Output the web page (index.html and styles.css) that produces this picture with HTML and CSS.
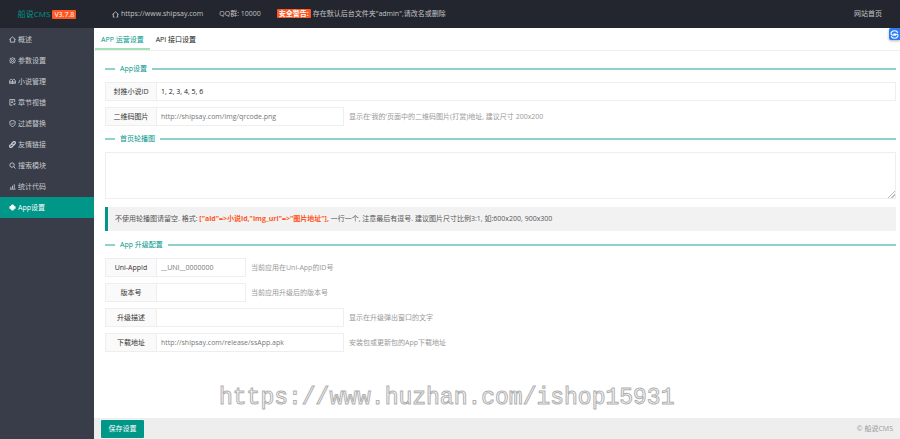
FILE: index.html
```html
<!DOCTYPE html>
<html lang="zh-CN">
<head>
    <meta charset="UTF-8">
    <meta name="viewport" content="width=device-width, initial-scale=1.0">
    <title>船说CMS</title>
    <link rel="stylesheet" href="styles.css">
</head>
<body>
    <header class="header">
        <div class="logo">船说CMS <span class="badge">V3.7.8</span></div>
        <nav class="header-nav">
            <a href="#"><svg class="icon" viewBox="0 0 16 16"><path d="M1 8l7-6 7 6M3 7v7h3M13 7v7h-3"/></svg>https://www.shipsay.com</a>
            <span class="qq">QQ群: 10000</span>
            <span><span class="badge warning">安全警告:</span> 存在默认后台文件夹"admin",请改名或删除</span>
        </nav>
        <a class="home-link" href="#">网站首页</a>
    </header>

    <div class="layout">
        <nav class="side">
            <a href="#"><svg class="icon" viewBox="0 0 16 16"><path d="M1 8l7-6 7 6M3 7v7h10V7"/></svg>概述</a>
            <a href="#"><svg class="icon" viewBox="0 0 16 16"><path d="M8 1l2 2 3 0 0 3 2 2-2 2 0 3-3 0-2 2-2-2-3 0 0-3-2-2 2-2 0-3 3 0z"/><circle cx="8" cy="8" r="2.5"/></svg>参数设置</a>
            <a href="#"><svg class="icon" viewBox="0 0 16 16"><path d="M8 5v8M8 5C6 2 3 3 2 5L1 12h14l-1-7c-1-2-4-3-6 0M2 9h12"/></svg>小说管理</a>
            <a href="#"><svg class="icon" viewBox="0 0 16 16"><path d="M13 7V1H2v13h6M5 5h5M5 8h4M10 14l5-5M11 10l3 4"/></svg>章节视错</a>
            <a href="#"><svg class="icon" viewBox="0 0 16 16"><path d="M8 1l6 2v5c0 4-3 6-6 7-3-1-6-3-6-7V3zM5 8l2 2 4-4"/></svg>过滤替换</a>
            <a href="#"><svg class="icon bold" viewBox="0 0 16 16"><path d="M7 9c-2-2-1-3 0-4l3-3c3-2 6 1 4 4l-3 3M9 7c2 2 1 3 0 4l-3 3c-3 2-6-1-4-4l2-2"/></svg>友情链接</a>
            <a href="#"><svg class="icon" viewBox="0 0 16 16"><circle cx="7" cy="7" r="5"/><path d="M11 11l4 4"/></svg>搜索模块</a>
            <a href="#"><svg class="icon" viewBox="0 0 16 16"><path d="M2 14h13M4 13V9M8 13V6M12 13V3"/></svg>统计代码</a>
            <a href="#" class="active"><svg class="icon solid" viewBox="0 0 16 16"><path d="M4 5c0-5 8-5 8 0h3v6h-3v2h-2v2H6v-2H4v-2H1V5z"/></svg>App设置</a>
        </nav>

        <main class="main">
            <div class="tabs">
                <a href="#" class="active">APP 运营设置</a>
                <a href="#">API 接口设置</a>
            </div>

            <form class="form" id="appForm">
                <fieldset class="title"><legend>App设置</legend></fieldset>
                <div class="row">
                    <label for="pushId">封推小说ID</label>
                    <input class="dark" type="text" id="pushId" value="1, 2, 3, 4, 5, 6">
                </div>
                <div class="row">
                    <label for="qrcode">二维码图片</label>
                    <input class="medium" type="text" id="qrcode" value="http://shipsay.com/img/qrcode.png">
                    <span class="tip">显示在'我的'页面中的二维码图片(打赏)地址, 建议尺寸 200x200</span>
                </div>

                <fieldset class="title"><legend><label for="slides">首页轮播图</label></legend></fieldset>
                <textarea id="slides"></textarea>
                <p class="note">不使用轮播图请留空. 格式: <strong>["aid"=&gt;小说id,"img_url"=&gt;"图片地址"],</strong> 一行一个, 注意最后有逗号. 建议图片尺寸比例3:1, 如:600x200, 900x300</p>

                <fieldset class="title"><legend>App 升级配置</legend></fieldset>
                <div class="row">
                    <label for="uniAppId">Uni-AppId</label>
                    <input class="short" type="text" id="uniAppId" value="__UNI__0000000">
                    <span class="tip">当前应用在Uni-App的ID号</span>
                </div>
                <div class="row">
                    <label for="version">版本号</label>
                    <input class="short" type="text" id="version">
                    <span class="tip">当前应用升级后的版本号</span>
                </div>
                <div class="row">
                    <label for="desc">升级描述</label>
                    <input class="medium" type="text" id="desc">
                    <span class="tip">显示在升级弹出窗口的文字</span>
                </div>
                <div class="row">
                    <label for="download">下载地址</label>
                    <input class="medium" type="text" id="download" value="http://shipsay.com/release/ssApp.apk">
                    <span class="tip">安装包或更新包的App下载地址</span>
                </div>
            </form>

            <div class="watermark">https://www.huzhan.com/ishop15931</div>

            <footer class="footer">
                <button type="submit" form="appForm">保存设置</button>
                <span>© 船说CMS</span>
            </footer>
        </main>
    </div>

    <button class="float-btn" type="button" aria-label="快捷工具">
        <svg viewBox="0 0 16 16"><path d="M14 5C12 0 4 0 2 5c-1 3 1 4 4 4h5M2 11c2 5 10 5 12 0 1-3-1-4-4-4H6"/></svg>
    </button>
</body>
</html>
```
FILE: styles.css
```css
* {
    box-sizing: border-box;
}
body {
    margin: 0;
    min-height: 100vh;
    display: flex;
    flex-direction: column;
    font-family: "Open Sans", "Noto Sans CJK SC", sans-serif;
    font-size: 7px;
    line-height: 10px;
    color: #333;
    background-color: #fff;
}
a {
    color: inherit;
    text-decoration: none;
}
input, textarea, button {
    font: inherit;
    border-radius: 0;
}
.icon {
    width: 7px;
    height: 7px;
    margin-right: 2px;
    flex: none;
    fill: none;
    stroke: currentColor;
    stroke-width: 2;
}
.icon.bold {
    stroke-width: 3;
}
.icon.solid {
    fill: currentColor;
    stroke: none;
}

/* header */
.header {
    display: flex;
    align-items: center;
    height: 28px;
    background-color: #23262e;
    color: #c2c3c5;
}
.logo {
    width: 94px;
    text-align: center;
    font-size: 8px;
    color: #009688;
    white-space: nowrap;
}
.badge {
    display: inline-block;
    padding: 0 2px;
    font-size: 7px;
    line-height: 9px;
    border-radius: 1px;
    background-color: #ff5722;
    color: #fff;
}
.badge.warning {
    font-weight: bold;
}
.header-nav {
    display: flex;
    flex: 1;
    gap: 16px;
    padding-left: 18px;
}
.header-nav a {
    display: flex;
    align-items: center;
}
.home-link {
    padding-right: 18px;
}

/* sidebar */
.layout {
    display: flex;
    flex: 1;
}
.side {
    width: 94px;
    flex: none;
    padding-top: 1px;
    background-color: #393d49;
    color: #c9cacd;
}
.side a {
    display: flex;
    align-items: center;
    height: 21px;
    padding-left: 9px;
}
.side .active {
    background-color: #009688;
    color: #fff;
}

/* content */
.main {
    display: flex;
    flex-direction: column;
    flex: 1;
    min-width: 0;
}
.tabs {
    display: flex;
    height: 23px;
    padding-left: 1px;
    border-bottom: 1px solid #eee;
}
.tabs a {
    padding: 0 6px;
    line-height: 24px;
    color: #222;
}
.tabs .active {
    color: #009688;
    border-bottom: 2px solid #a5dfb9;
}
.form {
    padding: 5px 4px 0 11px;
}
.title {
    margin: 7px 0;
    padding: 0 0 0 10px;
    border: 0;
    border-top: 2px solid #8fd2cb;
}
.title legend {
    padding: 0 5px;
    line-height: 12px;
    color: #009688;
}
.row {
    display: flex;
    align-items: center;
    height: 19px;
    margin-bottom: 6px;
}
.row label {
    width: 52px;
    flex: none;
    height: 19px;
    line-height: 17px;
    text-align: center;
    border: 1px solid #eee;
    background-color: #fafafa;
}
.row input {
    flex: 1;
    min-width: 0;
    height: 19px;
    padding: 0 4px;
    border: 1px solid #eee;
    border-left: 0;
    color: #777;
}
.row .dark {
    color: #222;
}
.row .short {
    flex: none;
    width: 89px;
}
.row .medium {
    flex: none;
    width: 187px;
}
.tip {
    margin-left: 5px;
    color: #999;
}
.form textarea {
    display: block;
    width: 100%;
    height: 47px;
    padding: 4px;
    border: 1px solid #eee;
}
.form textarea::-webkit-resizer {
    background: linear-gradient(135deg, #fff 74%, #bbb 74%, #bbb 79%, #fff 79%, #fff 86%, #bbb 86%, #bbb 91%, #fff 91%);
}
.note {
    margin: 8px 0;
    padding: 7px;
    border-left: 3px solid #009688;
    background-color: #f2f2f2;
    color: #555;
}
.note strong {
    color: #ff5722;
}
.watermark {
    margin: auto 0 6px;
    padding-left: 125px;
    font-family: "Liberation Mono", monospace;
    font-size: 23px;
    line-height: 28px;
    color: #fff;
    -webkit-text-stroke: 1px #b0b0b0;
}
.footer {
    display: flex;
    align-items: center;
    justify-content: space-between;
    height: 21px;
    padding: 0 7px;
    background-color: #eee;
    color: #999;
}
.footer button {
    width: 43px;
    height: 18px;
    padding: 0;
    border: 0;
    border-radius: 1px;
    background-color: #009688;
    color: #fff;
}
.float-btn {
    position: fixed;
    top: 28px;
    right: 0;
    width: 11px;
    height: 12px;
    padding: 1px;
    border: 0;
    border-radius: 2px 0 0 2px;
    background-color: #2b7cf6;
    box-shadow: 0 1px 3px rgba(0, 0, 0, 0.3);
}
.float-btn svg {
    display: block;
    width: 9px;
    height: 9px;
    fill: none;
    stroke: #fff;
    stroke-width: 2;
}
```
